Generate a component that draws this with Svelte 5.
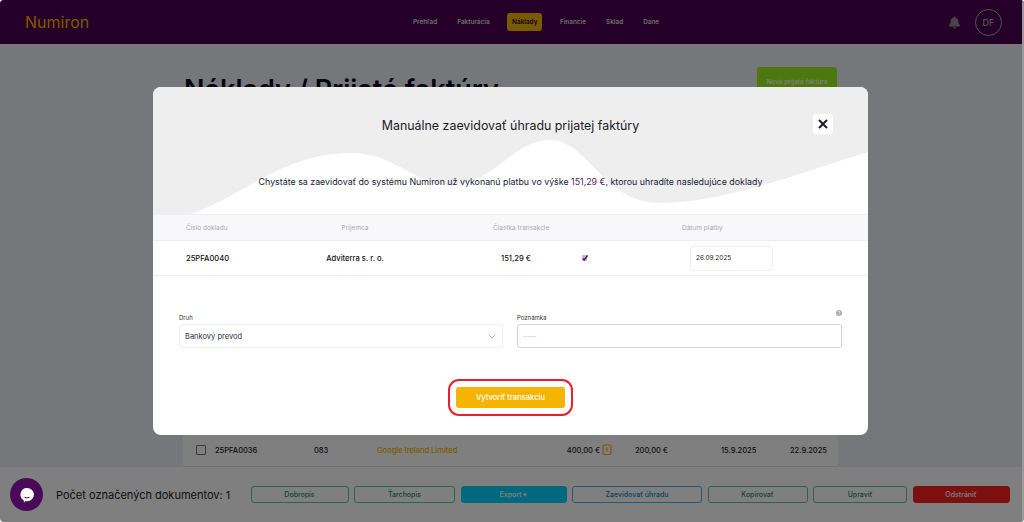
<script>
  const nav = ['Prehľad', 'Fakturácia', 'Náklady', 'Financie', 'Sklad', 'Dane']
  const actions = [
    { label: 'Dobropis', kind: 'green', w: 98 },
    { label: 'Ťarchopis', kind: 'green', w: 101 },
    { label: 'Export ▾', kind: 'blue', w: 106 },
    { label: 'Zaevidovať úhradu', kind: 'outline-blue', w: 130 },
    { label: 'Kopírovať', kind: 'green', w: 100 },
    { label: 'Upraviť', kind: 'green', w: 94 },
    { label: 'Odstrániť', kind: 'red', w: 97 }
  ]
</script>

<div class="page">
  <header class="topbar">
    <div class="logo">Numiron</div>
    <nav>
      {#each nav as item}
        <span class="nav-item" class:active={item === 'Náklady'}>{item}</span>
      {/each}
    </nav>
    <div class="user">
      <svg class="bell" width="11" height="13" viewBox="0 0 448 512" fill="#8d8d8d"><path d="M224 512c35 0 64-29 64-64H160c0 35 29 64 64 64zm215-150c-19-21-55-52-55-154 0-78-54-140-128-155V32a32 32 0 0 0-64 0v21C118 68 64 130 64 208c0 102-36 133-55 154-6 6-9 14-9 22 0 16 13 32 32 32h384c19 0 32-16 32-32 0-8-3-16-9-22z"/></svg>
      <div class="avatar">DF</div>
    </div>
  </header>

  <main>
    <div class="head">
      <h1>Náklady / Prijaté faktúry</h1>
      <button class="new-btn">Nová prijatá faktúra</button>
    </div>
    <div class="row">
      <span class="check"></span>
      <span class="c-num">25PFA0036</span>
      <span class="c-var">083</span>
      <span class="c-name">Google Ireland Limited</span>
      <span class="c-sum">400,00 €</span>
      <svg class="coin" width="10" height="12" viewBox="0 0 10 12" fill="none" stroke="#f5b400" stroke-width="1.2"><rect x="1" y="1" width="8" height="9.5" rx="1.5"/><path d="M5 3.5v4"/></svg>
      <span class="c-paid">200,00 €</span>
      <span class="c-d1">15.9.2025</span>
      <span class="c-d2">22.9.2025</span>
    </div>
  </main>

  <footer class="bottom">
    <div class="count">Počet označených dokumentov: 1</div>
    <div class="actions">
      {#each actions as a}
        <button class="act {a.kind}" style="width:{a.w}px">{a.label}</button>
      {/each}
    </div>
  </footer>

  <div class="overlay">
    <div class="modal">
      <svg class="wave" width="715" height="127" viewBox="0 0 715 127">
        <path fill="#eeeeee" d="M0 0H715V65C640 88 570 116 507 116C450 116 435 53 397 53C360 53 340 98 297 98C260 98 245 66 197 66C130 66 90 110 37 127H0Z"/>
      </svg>
      <div class="title-row">
        <h2>Manuálne zaevidovať úhradu prijatej faktúry</h2>
        <button class="close" aria-label="Zavrieť">
          <svg width="10" height="10" viewBox="0 0 10 10" stroke="#1c1c28" stroke-width="2"><path d="M1 1l8 8M9 1l-8 8"/></svg>
        </button>
      </div>
      <p class="lead">Chystáte sa zaevidovať do systému Numiron už vykonanú platbu vo výške <span class="sum">151,29 €</span>, ktorou uhradíte nasledujúce doklady</p>

      <div class="grid thead">
        <span>Číslo dokladu</span>
        <span class="center">Príjemca</span>
        <span></span>
        <span>Čiastka transakcie</span>
        <span></span>
        <span>Dátum platby</span>
      </div>
      <div class="grid tbody">
        <span class="strong">25PFA0040</span>
        <span class="strong center">Adviterra s. r. o.</span>
        <span></span>
        <span class="strong amount">151,29 €</span>
        <svg class="edit" width="6" height="6" viewBox="0 0 6 6" fill="none"><rect width="5" height="6" y="0" fill="#c9b8d2"/><path d="M1 3.500L2.200 5 5.500.5" stroke="#4a0a5a" stroke-width="1.300"/></svg>
        <span class="date">26.09.2025</span>
      </div>

      <div class="form">
        <div class="field">
          <span class="label">Druh</span>
          <div class="select">
            <span>Bankový prevod</span>
            <svg width="8" height="5" viewBox="0 0 8 5" fill="none" stroke="#b9bcc4" stroke-width="1"><path d="M.5.5L4 4 7.5.5"/></svg>
          </div>
        </div>
        <div class="field">
          <span class="label">Poznámka</span>
          <i class="info">?</i>
          <div class="input">----</div>
        </div>
      </div>

      <div class="submit-row">
        <div class="marker">
          <button class="submit">Vytvoriť transakciu</button>
        </div>
      </div>
    </div>
  </div>

  <div class="chat">
    <svg width="16" height="16" viewBox="0 0 16 16"><path fill="#fff" d="M8 1a7 6.6 0 0 1 0 13.2c-.6 0-1.1 0-1.600-.2L5 15.500 4.600 13.200A6.600 6.600 0 0 1 8 1z"/><path d="M5.500 10.300q2.500 1.200 5 0" stroke="#4a0a5a" stroke-width="1" fill="none"/></svg>
  </div>
  <div class="scrollbar"></div>
</div>

<style>
  :global(body) {
    margin: 0;
  }
  .page {
    position: relative;
    display: flex;
    flex-direction: column;
    width: 1024px;
    height: 522px;
    overflow: hidden;
    border-radius: 4px;
    background: #eceef6;
    font-family: Inter, "Noto Sans", sans-serif;
    color: #1c1c28;
  }
  button {
    font-family: inherit;
    cursor: pointer;
  }

  .topbar {
    display: flex;
    align-items: center;
    height: 44px;
    flex: none;
    padding: 0 22px 0 25px;
    background: #4a0052;
  }
  .logo {
    width: 385.500px;
    font-size: 16px;
    font-weight: 400;
    color: #f5b400;
  }
  nav {
    display: flex;
    align-items: center;
    gap: 15px;
    flex: 1;
  }
  .nav-item {
    padding: 0 2.500px;
    font-size: 6.400px;
    font-weight: 600;
    color: #d8d8d8;
  }
  .nav-item.active {
    display: flex;
    align-items: center;
    height: 18px;
    padding: 0 5px;
    border-radius: 3px;
    background: #f5b400;
    color: #33003a;
  }
  .user {
    display: flex;
    align-items: center;
    gap: 15px;
  }
  .avatar {
    display: flex;
    align-items: center;
    justify-content: center;
    width: 25px;
    height: 25px;
    border: 1px solid #aaa;
    border-radius: 50%;
    font-size: 9px;
    color: #bbb;
  }

  main {
    display: flex;
    flex: 1;
    flex-direction: column;
    justify-content: space-between;
    width: 655px;
    margin-left: 183px;
  }
  .head {
    display: flex;
    align-items: flex-start;
    justify-content: space-between;
    padding-top: 23px;
  }
  h1 {
    margin: 5px 0 0 1px;
    font-size: 27px;
    font-weight: 600;
    line-height: 36px;
    color: #0c0c24;
  }
  .new-btn {
    width: 80px;
    height: 30px;
    padding: 0;
    margin-right: 1px;
    border: none;
    border-radius: 3px;
    background: #9bf020;
    color: #fff;
    font-size: 6.500px;
    font-weight: 500;
  }
  .row {
    display: flex;
    align-items: center;
    height: 32px;
    background: #fff;
    font-size: 7.500px;
    font-weight: 500;
    border-bottom: 1px solid #e4e4e4;
  }
  .check {
    width: 8px;
    height: 8px;
    margin-left: 13px;
    border: 1px solid #777;
    border-radius: 1px;
  }
  .c-num { margin-left: 9px; width: 99px; }
  .c-var { width: 63px; }
  .c-name { width: 152px; color: #f5b400; }
  .c-sum { width: 36px; margin-left: 35px; text-align: right; }
  .coin { margin-left: 2px; }
  .c-paid { width: 36px; margin-left: 23px; }
  .c-d1 { width: 69px; margin-left: 50px; }

  .bottom {
    display: flex;
    align-items: center;
    flex: none;
    height: 55px;
    padding: 0 14px 0 56px;
    background: #fff;
  }
  .count {
    width: 194.500px;
    font-size: 11px;
    white-space: nowrap;
  }
  .actions {
    display: flex;
    gap: 5.500px;
  }
  .act {
    height: 17px;
    padding: 0;
    border: 1px solid #5cc59b;
    border-radius: 3px;
    background: #fff;
    font-size: 7px;
    font-weight: 500;
    color: #1d8a6a;
  }
  .act.blue { background: #00d0ff; border-color: #00d0ff; color: #fff; }
  .act.outline-blue { border-color: #4fb2e8; color: #0b84c4; }
  .act.red { background: #f81e20; border-color: #f81e20; color: #fff; }

  .overlay {
    position: absolute;
    inset: 0;
    background: rgba(0, 0, 0, 0.5);
  }
  .modal {
    position: absolute;
    left: 153px;
    top: 87px;
    width: 715px;
    height: 348px;
    overflow: hidden;
    border-radius: 8px;
    background: #fff;
  }
  .wave {
    position: absolute;
    left: 0;
    top: 0;
  }
  .title-row {
    position: relative;
    display: flex;
    align-items: center;
    justify-content: center;
    height: 76px;
  }
  h2 {
    margin: 0;
    font-size: 12.400px;
    font-weight: 400;
    color: #1c1c28;
  }
  .close {
    position: absolute;
    right: 35px;
    top: 27px;
    display: flex;
    align-items: center;
    justify-content: center;
    width: 20px;
    height: 20px;
    padding: 0;
    border: none;
    border-radius: 3px;
    background: #fff;
  }
  .lead {
    position: relative;
    height: 51px;
    margin: 0;
    padding-top: 13px;
    box-sizing: border-box;
    text-align: center;
    font-size: 8.850px;
    color: #1c2233;
  }
  .sum { color: #5a1a6a; }
  .grid {
    position: relative;
    display: grid;
    grid-template-columns: 112px 114px 81px 89px 100px 100px;
    align-items: center;
    padding-left: 33px;
  }
  .center { text-align: center; }
  .thead {
    height: 25px;
    background: #f8f8fb;
    border-top: 1px solid #f0f0f4;
    border-bottom: 1px solid #eeeef2;
    font-size: 6.500px;
    color: #aaa;
  }
  .tbody {
    height: 34px;
    border-bottom: 1px solid #eeeef2;
    font-size: 7.600px;
  }
  .strong { font-weight: 500; color: #111; }
  .amount { padding-left: 8px; }
  .date {
    display: flex;
    align-items: center;
    width: 76px;
    height: 23px;
    margin-left: 8px;
    padding-left: 5px;
    border: 1px solid #f0f0f4;
    border-radius: 3px;
    font-size: 6.500px;
  }
  .form {
    display: grid;
    grid-template-columns: 324px 325px;
    gap: 14px;
    padding: 37px 0 0 26px;
  }
  .field {
    position: relative;
    display: flex;
    flex-direction: column;
    gap: 2px;
  }
  .label {
    height: 9px;
    line-height: 9px;
    font-size: 6px;
    color: #333;
  }
  .select, .input {
    display: flex;
    align-items: center;
    height: 24px;
    box-sizing: border-box;
    border-radius: 3px;
    font-size: 7.500px;
  }
  .select {
    justify-content: space-between;
    padding: 0 6px 0 5px;
    border: 1px solid #f0f0f4;
    color: #2a2f45;
  }
  .input {
    padding-left: 5px;
    border: 1px solid #d4d4d4;
    color: #c4c4c4;
  }
  .info {
    position: absolute;
    right: 0;
    top: -3px;
    width: 6px;
    height: 6px;
    border-radius: 50%;
    background: #a8a8b0;
    color: #fff;
    font-size: 5px;
    font-style: normal;
    line-height: 6px;
    text-align: center;
  }
  .submit-row {
    display: flex;
    justify-content: center;
    padding-top: 31px;
  }
  .marker {
    padding: 6px;
    border: 2px solid #e8202a;
    border-radius: 11px;
  }
  .submit {
    display: block;
    width: 109px;
    height: 21px;
    padding: 0;
    border: none;
    border-radius: 3px;
    background: #f5b400;
    color: #fff;
    font-size: 7.600px;
    font-weight: 500;
  }
  .chat {
    position: absolute;
    left: 10px;
    top: 478px;
    display: flex;
    align-items: center;
    justify-content: center;
    width: 33px;
    height: 33px;
    border-radius: 50%;
    background: #4a0a5a;
  }
  .scrollbar {
    position: absolute;
    right: 0;
    top: 0;
    bottom: 0;
    width: 2px;
    background: #9a9a9a;
  }
</style>
